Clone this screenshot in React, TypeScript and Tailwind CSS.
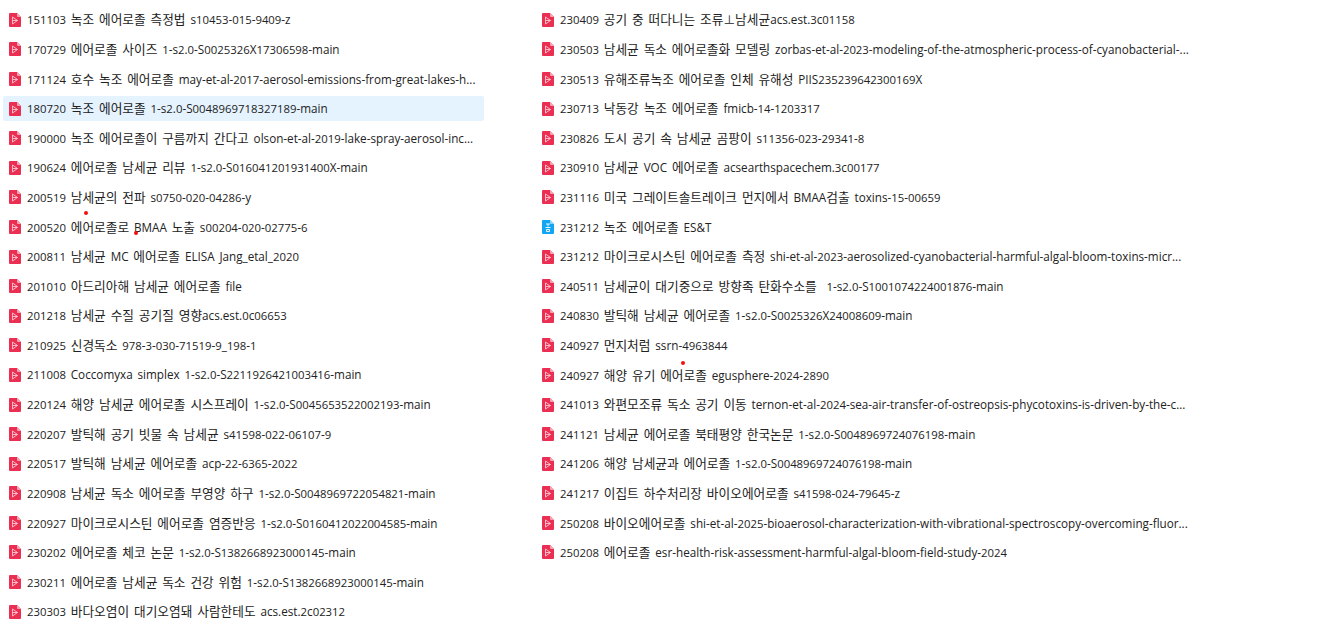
const left = [
  "151103 녹조 에어로졸 측정법 s10453-015-9409-z",
  "170729 에어로졸 사이즈 1-s2.0-S0025326X17306598-main",
  "171124 호수 녹조 에어로졸 may-et-al-2017-aerosol-emissions-from-great-lakes-h...",
  "180720 녹조 에어로졸 1-s2.0-S0048969718327189-main",
  "190000 녹조 에어로졸이 구름까지 간다고 olson-et-al-2019-lake-spray-aerosol-inc...",
  "190624 에어로졸 남세균 리뷰 1-s2.0-S016041201931400X-main",
  "200519 남세균의 전파 s0750-020-04286-y",
  "200520 에어로졸로 BMAA 노출 s00204-020-02775-6",
  "200811 남세균 MC 에어로졸 ELISA Jang_etal_2020",
  "201010 아드리아해 남세균 에어로졸 file",
  "201218 남세균 수질 공기질 영향acs.est.0c06653",
  "210925 신경독소 978-3-030-71519-9_198-1",
  "211008 Coccomyxa simplex 1-s2.0-S2211926421003416-main",
  "220124 해양 남세균 에어로졸 시스프레이 1-s2.0-S0045653522002193-main",
  "220207 발틱해 공기 빗물 속 남세균 s41598-022-06107-9",
  "220517 발틱해 남세균 에어로졸 acp-22-6365-2022",
  "220908 남세균 독소 에어로졸 부영양 하구 1-s2.0-S0048969722054821-main",
  "220927 마이크로시스틴 에어로졸 염증반응 1-s2.0-S0160412022004585-main",
  "230202 에어로졸 체코 논문 1-s2.0-S1382668923000145-main",
  "230211 에어로졸 남세균 독소 건강 위험 1-s2.0-S1382668923000145-main",
  "230303 바다오염이 대기오염돼 사람한테도 acs.est.2c02312",
];
const right = [
  "230409 공기 중 떠다니는 조류⊥남세균acs.est.3c01158",
  "230503 남세균 독소 에어로졸화 모델링 zorbas-et-al-2023-modeling-of-the-atmospheric-process-of-cyanobacterial-...",
  "230513 유해조류녹조 에어로졸 인체 유해성 PIIS235239642300169X",
  "230713 낙동강 녹조 에어로졸 fmicb-14-1203317",
  "230826 도시 공기 속 남세균 곰팡이 s11356-023-29341-8",
  "230910 남세균 VOC 에어로졸 acsearthspacechem.3c00177",
  "231116 미국 그레이트솔트레이크 먼지에서 BMAA검출 toxins-15-00659",
  "231212 녹조 에어로졸 ES&T",
  "231212 마이크로시스틴 에어로졸 측정 shi-et-al-2023-aerosolized-cyanobacterial-harmful-algal-bloom-toxins-micr...",
  "240511 남세균이 대기중으로 방향족 탄화수소를  1-s2.0-S1001074224001876-main",
  "240830 발틱해 남세균 에어로졸 1-s2.0-S0025326X24008609-main",
  "240927 먼지처럼 ssrn-4963844",
  "240927 해양 유기 에어로졸 egusphere-2024-2890",
  "241013 와편모조류 독소 공기 이동 ternon-et-al-2024-sea-air-transfer-of-ostreopsis-phycotoxins-is-driven-by-the-c...",
  "241121 남세균 에어로졸 북태평양 한국논문 1-s2.0-S0048969724076198-main",
  "241206 해양 남세균과 에어로졸 1-s2.0-S0048969724076198-main",
  "241217 이집트 하수처리장 바이오에어로졸 s41598-024-79645-z",
  "250208 바이오에어로졸 shi-et-al-2025-bioaerosol-characterization-with-vibrational-spectroscopy-overcoming-fluor...",
  "250208 에어로졸 esr-health-risk-assessment-harmful-algal-bloom-field-study-2024",
];

function PdfIcon() {
  return (
    <svg width="12" height="14" viewBox="0 0 12 14" className="shrink-0">
      <path d="M1 0H8L12 4V13a1 1 0 0 1-1 1H1a1 1 0 0 1-1-1V1a1 1 0 0 1 1-1Z" fill="#ea2f52" />
      <path d="M8 0L12 4H9a1 1 0 0 1-1-1Z" fill="#f7a3b4" />
      <path d="M3.5 4L8.5 7.5L3.5 11M3.5 4V7.5H8.5M3.5 7.5V11" fill="none" stroke="#ffc9d4" strokeWidth="0.9" />
    </svg>
  );
}

function DocIcon() {
  return (
    <svg width="12" height="14" viewBox="0 0 12 14" className="shrink-0">
      <path d="M1 0H8L12 4V13a1 1 0 0 1-1 1H1a1 1 0 0 1-1-1V1a1 1 0 0 1 1-1Z" fill="#12a5f4" />
      <path d="M8 0L12 4H9a1 1 0 0 1-1-1Z" fill="#8fd6fb" />
      <path d="M4 4H8M6 4V6.5M3.5 7.5H8.5M4.5 9.5H7.5V11.5H4.5Z" fill="none" stroke="#e6f6ff" strokeWidth="1" />
    </svg>
  );
}

function Label({ text }: { text: string }) {
  const parts = text.split(/([\uAC00-\uD7A3]+|[0-9]+)/);
  return (
    <span className="whitespace-pre text-[11.7px] leading-none text-[#222222] [word-spacing:1.8px]">
      {parts.map((p, i) => {
        if (i % 2 === 0) return p;
        return (
          <span key={i} className={/[0-9]/.test(p) ? "text-[11.35px]" : "text-[12.7px]"}>
            {p}
          </span>
        );
      })}
    </span>
  );
}

function Row({ text, selected }: { text: string; selected?: boolean }) {
  const isDoc = text === "231212 녹조 에어로졸 ES&T";
  return (
    <div className={`flex h-[25.6px] items-center gap-[6px] rounded-[2px] pl-[6px] ${selected ? "bg-[#e5f3ff]" : ""}`}>
      {isDoc ? <DocIcon /> : <PdfIcon />}
      <Label text={text} />
    </div>
  );
}

function Dot({ className }: { className: string }) {
  return <div className={`absolute h-[4px] w-[4px] rounded-full bg-[#f01010] ${className}`} />;
}

export default function App() {
  return (
    <div
      className="relative flex h-[628px] w-[1333px] overflow-hidden bg-white pl-[3px] pt-[7px]"
      style={{ fontFamily: '"Open Sans", "Noto Sans CJK KR", sans-serif' }}
    >
      <div className="flex w-[481px] flex-col gap-[4px]">
        {left.map((t) => (
          <Row key={t} text={t} selected={t.startsWith("180720")} />
        ))}
      </div>
      <div className="ml-[52px] flex w-[680px] flex-col gap-[4px]">
        {right.map((t) => (
          <Row key={t} text={t} />
        ))}
      </div>
      <Dot className="left-[84px] top-[211px]" />
      <Dot className="left-[134px] top-[231px]" />
      <Dot className="left-[681px] top-[361px]" />
    </div>
  );
}
